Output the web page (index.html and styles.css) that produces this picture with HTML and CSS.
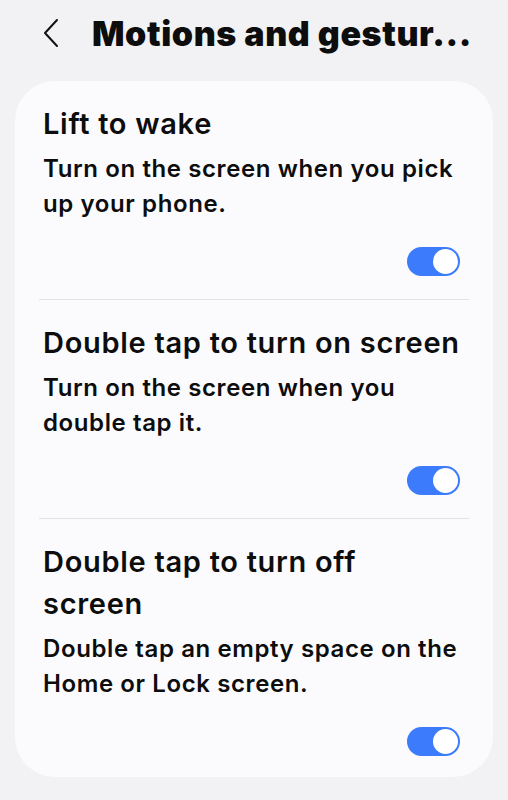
FILE: index.html
```html
<!DOCTYPE html>
<html lang="en">

<head>
    <meta charset="UTF-8">
    <meta name="viewport" content="width=device-width, initial-scale=1.0">
    <title>Motions and gestures</title>
    <link rel="stylesheet" href="styles.css">
</head>

<body>
    <header class="top-bar">
        <button class="back-btn" aria-label="Back">
            <svg width="18" height="30" viewBox="0 0 18 30">
                <path d="M15 2 L3 15 L15 28" fill="none" stroke="#111" stroke-width="2" stroke-linecap="round" stroke-linejoin="round"/>
            </svg>
        </button>
        <h1>Motions and gestur...</h1>
    </header>

    <section class="card">
        <div class="setting">
            <h2>Lift to wake</h2>
            <p>Turn on the screen when you pick up your phone.</p>
            <div class="toggle-row"><span class="toggle on"></span></div>
        </div>
        <div class="setting">
            <h2>Double tap to turn on screen</h2>
            <p>Turn on the screen when you double tap it.</p>
            <div class="toggle-row"><span class="toggle on"></span></div>
        </div>
        <div class="setting">
            <h2>Double tap to turn off screen</h2>
            <p>Double tap an empty space on the Home or Lock screen.</p>
            <div class="toggle-row"><span class="toggle on"></span></div>
        </div>
    </section>
</body>

</html>
```

FILE: styles.css
```css
body {
    margin: 0;
    background-color: #f2f2f4;
    color: #0d0d0d;
    font-family: 'Inter', 'Roboto', sans-serif;
    width: 508px;
    height: 800px;
    overflow: hidden;
}

.top-bar {
    display: flex;
    align-items: center;
    height: 66px;
    padding: 0 0 0 42px;
    box-sizing: border-box;
}

.back-btn {
    background: none;
    border: none;
    padding: 0;
    width: 50px;
    height: 30px;
    display: flex;
    align-items: center;
}

.top-bar h1 {
    margin: 0;
    font-size: 34px;
    font-weight: 900;
    letter-spacing: 0.6px;
    white-space: nowrap;
}

.card {
    background-color: #fbfbfd;
    margin: 15px 15px 0;
    border-radius: 40px;
    padding: 0 24px;
}

.setting {
    padding: 22px 8px 23px 4px;
    border-bottom: 1px solid #e2e2e4;
}

.setting:last-child {
    border-bottom: none;
    padding-bottom: 21px;
}

.setting h2 {
    margin: 0;
    font-size: 29px;
    font-weight: 600;
    line-height: 42px;
    letter-spacing: 0.7px;
}

.setting p {
    margin: 6px 0 0;
    font-size: 24px;
    font-weight: 600;
    line-height: 35px;
    letter-spacing: 0.6px;
}

.toggle-row {
    display: flex;
    justify-content: flex-end;
    margin-top: 26px;
    padding-right: 1px;
}

.toggle {
    position: relative;
    width: 53px;
    height: 29px;
    border-radius: 15px;
    background-color: #3b7bfc;
}

.toggle::after {
    content: '';
    position: absolute;
    top: 2px;
    right: 2px;
    width: 25px;
    height: 25px;
    border-radius: 50%;
    background-color: #fff;
}
```
